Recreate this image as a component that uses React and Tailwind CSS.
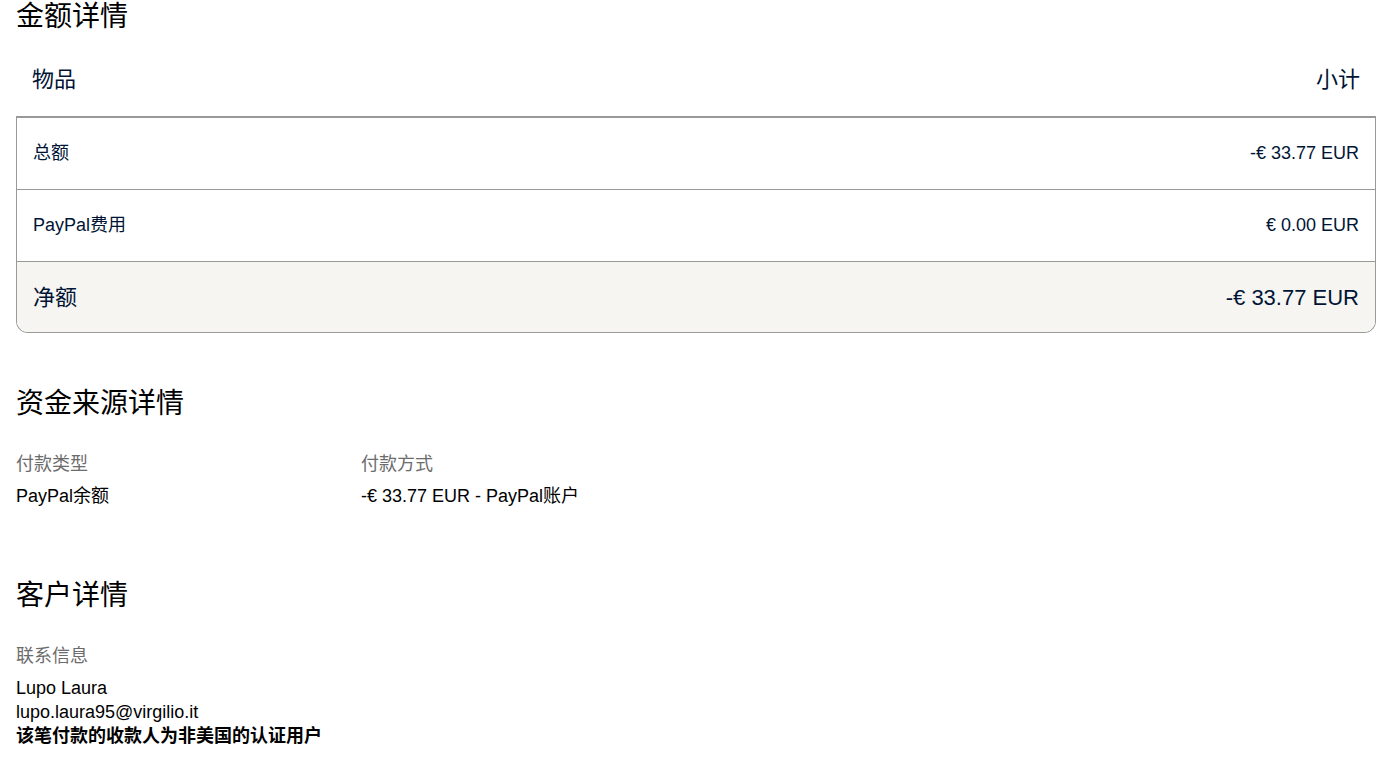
const FONT = "font-['Liberation_Sans','Noto_Sans_CJK_SC',sans-serif]";

const ROWS = [
  { label: '总额', value: '-€ 33.77 EUR' },
  { label: 'PayPal费用', value: '€ 0.00 EUR' },
];

export default function App() {
  return (
    <div className={`${FONT} min-h-screen bg-white pl-4 pr-[6px] text-black`}>
      {/* 金额详情 */}
      <h2 className="text-[28px] leading-[34px] font-normal">金额详情</h2>
      <div className="flex justify-between px-4 pt-[34px] pb-[24px] text-[22px] leading-[24px] text-[#001435]">
        <span>物品</span>
        <span>小计</span>
      </div>
      <div className="overflow-hidden rounded-b-xl border-x border-t-2 border-b border-[#999999] text-[#001435]">
        {ROWS.map((r) => (
          <div key={r.label} className="flex h-[72px] items-center justify-between border-b border-[#999999] px-4 text-[18px]">
            <span>{r.label}</span>
            <span>{r.value}</span>
          </div>
        ))}
        <div className="flex h-[70px] items-center justify-between bg-[#f7f5f2] px-4 text-[22px]">
          <span>净额</span>
          <span>-€ 33.77 EUR</span>
        </div>
      </div>

      {/* 资金来源详情 */}
      <h2 className="mt-[54px] text-[28px] leading-[34px] font-normal">资金来源详情</h2>
      <div className="mt-[31px] flex text-[18px] leading-6">
        <div className="w-[345px]">
          <p className="text-[#6c6c6c]">付款类型</p>
          <p className="mt-2">PayPal余额</p>
        </div>
        <div>
          <p className="text-[#6c6c6c]">付款方式</p>
          <p className="mt-2">-€ 33.77 EUR - PayPal账户</p>
        </div>
      </div>

      {/* 客户详情 */}
      <h2 className="mt-[71px] text-[28px] leading-[34px] font-normal">客户详情</h2>
      <div className="mt-[31px] text-[18px] leading-6">
        <p className="text-[#6c6c6c]">联系信息</p>
        <p className="mt-2">Lupo Laura</p>
        <p>lupo.laura95@virgilio.it</p>
        <p className="font-bold">该笔付款的收款人为非美国的认证用户</p>
      </div>
    </div>
  );
}
